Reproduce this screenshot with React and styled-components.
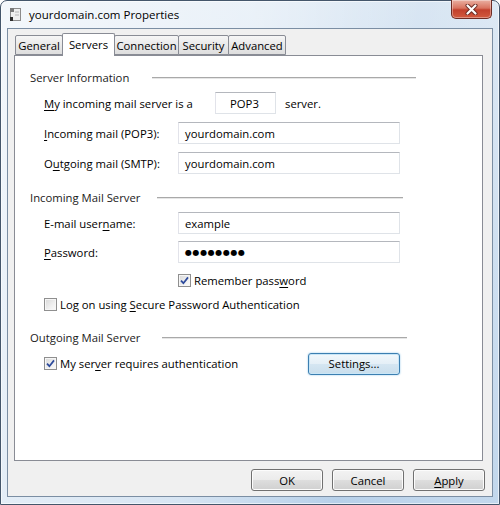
import styled, { createGlobalStyle } from "styled-components"

const GlobalStyle = createGlobalStyle`
  html, body {
    margin: 0;
    padding: 0;
    background: #fff;
  }
  body {
    font-family: "Open Sans", "Noto Sans", sans-serif;
    font-size: 11.3px;
    color: #000;
  }
  * { box-sizing: border-box; }
`

const Window = styled.div`
  width: 500px;
  height: 505px;
  display: flex;
  flex-direction: column;
  padding: 0 6px 7px 6px;
  border: 1px solid #44566b;
  border-radius: 7px 7px 0 0;
  background:
    linear-gradient(100deg, rgba(255,255,255,0.7) 0%, rgba(255,255,255,0.45) 45%, rgba(255,255,255,0) 72%, rgba(255,255,255,0.15) 90%),
    linear-gradient(180deg, #d9e6f3 0%, #c3d8ed 60%, #b7d0e9 100%);
  box-shadow: inset 0 0 0 1px rgba(255,255,255,0.6);
`

const TitleBar = styled.div`
  height: 27px;
  display: flex;
  align-items: center;
`

const TitleIcon = styled.svg`
  width: 15px;
  height: 15px;
  margin-left: 1px;
  flex: none;
`

const TitleText = styled.span`
  margin-left: 6px;
  font-size: 11.5px;
  color: #000;
  flex: 1;
`

const CloseButton = styled.div`
  align-self: flex-start;
  margin-top: -1px;
  margin-right: 1px;
  width: 41px;
  height: 19px;
  display: flex;
  align-items: center;
  justify-content: center;
  border: 1px solid #6e2c24;
  border-top: none;
  border-radius: 0 0 5px 5px;
  background: linear-gradient(180deg, #eab0a2 0%, #d9735f 45%, #c2402c 55%, #d25a3f 100%);
  box-shadow: inset 0 0 0 1px rgba(255,255,255,0.35);
`

const Client = styled.div`
  flex: 1;
  display: flex;
  flex-direction: column;
  background: #f0f0f0;
  border: 1px solid #7b8ea3;
  padding: 4px 9px 0 6px;
`

const TabRow = styled.div`
  display: flex;
  align-items: flex-end;
  height: 23px;
  padding-left: 1px;
  margin-bottom: -1px;
  position: relative;
  z-index: 1;
`

const Tab = styled.div`
  width: ${(p) => p.$w}px;
  height: ${(p) => (p.$active ? 23 : 20)}px;
  margin-bottom: ${(p) => (p.$active ? 0 : 1)}px;
  margin-right: -1px;
  display: flex;
  align-items: center;
  justify-content: center;
  border: 1px solid #898c95;
  border-bottom: ${(p) => (p.$active ? "none" : "1px solid #898c95")};
  border-radius: 2px 2px 0 0;
  background: ${(p) => (p.$active ? "#fff" : "linear-gradient(180deg, #f6f6f6 0%, #e8e8e8 55%, #dedede 100%)")};
  padding-bottom: ${(p) => (p.$active ? 2 : 0)}px;
  position: relative;
  z-index: ${(p) => (p.$active ? 2 : 1)};
`

const Panel = styled.div`
  height: 406px;
  background: #fff;
  border: 1px solid #898c95;
  display: flex;
  flex-direction: column;
  padding-left: 15px;
`

const GroupHeader = styled.div`
  margin-top: ${(p) => p.$top}px;
  height: 16px;
  display: grid;
  grid-template-columns: ${(p) => p.$lineStart - 30}px ${(p) => p.$lineEnd - p.$lineStart}px;
  align-items: center;
`

const GroupLabel = styled.span`
  white-space: nowrap;
  color: #1a1a1a;
`

const GroupLine = styled.div`
  height: 1px;
  margin-top: 1px;
  background: #a9a9a9;
  box-shadow: 0 1px 0 #e6e6e6;
`

const FieldRow = styled.div`
  margin-top: ${(p) => p.$top}px;
  height: ${(p) => p.$h || 22}px;
  padding-left: 14px;
  display: flex;
  align-items: center;
`

const Label = styled.span`
  width: ${(p) => p.$w || 134}px;
  flex: none;
  white-space: nowrap;
`

const Key = styled.span`
  text-decoration: underline;
  text-underline-offset: 2px;
`

const TextBox = styled.div`
  width: ${(p) => p.$w || 222}px;
  height: 22px;
  flex: none;
  display: flex;
  align-items: center;
  padding-left: ${(p) => p.$pad || 6}px;
  background: #fff;
  border: 1px solid #dfe3e8;
  border-top-color: #b4b7bd;
  border-left-color: #e2e3ea;
`

const Dots = styled.span`
  font-family: "DejaVu Sans", sans-serif;
  font-size: 8px;
  letter-spacing: 0.6px;
  font-weight: bold;
`

const TrailText = styled.span`
  margin-left: 9px;
`

const CheckRow = styled.label`
  display: flex;
  align-items: center;
  gap: 3px;
  margin-left: ${(p) => p.$indent || 0}px;
  white-space: nowrap;
`

const Box = styled.span`
  width: 13px;
  height: 13px;
  flex: none;
  display: flex;
  align-items: center;
  justify-content: center;
  border: 1px solid #8f8f8f;
  background: linear-gradient(135deg, #d8d8d8 0%, #f0f0f0 60%, #fbfbfb 100%);
  box-shadow: inset 0 0 0 1px #f6f6f6;
`

const SpreadRow = styled(FieldRow)`
  width: 370px;
  justify-content: space-between;
`

const Button = styled.div`
  width: ${(p) => p.$w || 72}px;
  height: 22px;
  display: flex;
  align-items: center;
  justify-content: center;
  border: 1px solid ${(p) => (p.$focus ? "#3c7fb1" : "#707070")};
  border-radius: 3px;
  background: ${(p) =>
    p.$focus
      ? "linear-gradient(180deg, #f2f8fc 0%, #e4eff7 50%, #d5e6f2 51%, #c9deec 100%)"
      : "linear-gradient(180deg, #f3f3f3 0%, #ebebeb 50%, #dedede 51%, #d0d0d0 100%)"};
  box-shadow: inset 0 0 0 1px ${(p) => (p.$focus ? "#c9e6f7" : "#fcfcfc")}
    ${(p) => (p.$focus ? ", 0 0 2px #8ac3e6" : "")};
`

const ButtonBar = styled.div`
  display: flex;
  justify-content: flex-end;
  gap: 9px;
  margin-top: 8px;
  margin-right: -2px;
`

const Check = ({ checked }) => (
  <Box>
    {checked && (
      <svg width="9" height="9" viewBox="0 0 9 9">
        <path d="M1 4.6 L3.4 7.2 L8 1.4" fill="none" stroke="#2c4a9c" strokeWidth="1.7" />
      </svg>
    )}
  </Box>
)

const tabs = [
  { name: "General", w: 48 },
  { name: "Servers", w: 53, active: true },
  { name: "Connection", w: 65 },
  { name: "Security", w: 51 },
  { name: "Advanced", w: 58 },
]

const App = () => {
  return (
    <>
      <GlobalStyle />
      <Window>
        <TitleBar>
          <TitleIcon viewBox="0 0 15 15">
            <rect x="2.5" y="1.5" width="10" height="12" fill="#efefef" stroke="#8b8b8b" />
            <rect x="2" y="1" width="4" height="4" fill="#7a7a7a" />
            <rect x="2" y="10" width="3" height="4" fill="#2d2d2d" />
            <line x1="7" y1="5" x2="11" y2="5" stroke="#b5b5b5" />
            <line x1="7" y1="8" x2="11" y2="8" stroke="#b5b5b5" />
          </TitleIcon>
          <TitleText>yourdomain.com Properties</TitleText>
          <CloseButton>
            <svg width="13" height="11" viewBox="0 0 13 11">
              <path d="M2.5 1.5 L10.5 9.5 M10.5 1.5 L2.5 9.5" stroke="#6a2a22" strokeWidth="4" strokeLinecap="round" />
              <path d="M2.5 1.5 L10.5 9.5 M10.5 1.5 L2.5 9.5" stroke="#fff" strokeWidth="2.2" strokeLinecap="round" />
            </svg>
          </CloseButton>
        </TitleBar>

        <Client>
          <TabRow>
            {tabs.map((t) => (
              <Tab key={t.name} $w={t.w} $active={t.active}>
                {t.name}
              </Tab>
            ))}
          </TabRow>

          <Panel>
            <GroupHeader $top={13} $lineStart={152} $lineEnd={416}>
              <GroupLabel>Server Information</GroupLabel>
              <GroupLine />
            </GroupHeader>
            <FieldRow $top={7}>
              <Label $w={171}><Key>M</Key>y incoming mail server is a</Label>
              <TextBox $w={61} $pad={14}>POP3</TextBox>
              <TrailText>server.</TrailText>
            </FieldRow>
            <FieldRow $top={8}>
              <Label><Key>I</Key>ncoming mail (POP3):</Label>
              <TextBox>yourdomain.com</TextBox>
            </FieldRow>
            <FieldRow $top={8}>
              <Label>O<Key>u</Key>tgoing mail (SMTP):</Label>
              <TextBox>yourdomain.com</TextBox>
            </FieldRow>

            <GroupHeader $top={15} $lineStart={157} $lineEnd={403}>
              <GroupLabel>Incoming Mail Server</GroupLabel>
              <GroupLine />
            </GroupHeader>
            <FieldRow $top={7}>
              <Label>E-mail user<Key>n</Key>ame:</Label>
              <TextBox>example</TextBox>
            </FieldRow>
            <FieldRow $top={7}>
              <Label><Key>P</Key>assword:</Label>
              <TextBox><Dots>●●●●●●●●</Dots></TextBox>
            </FieldRow>
            <FieldRow $top={9} $h={16}>
              <CheckRow $indent={134}>
                <Check checked />
                <span>Remember pass<Key>w</Key>ord</span>
              </CheckRow>
            </FieldRow>
            <FieldRow $top={8} $h={16}>
              <CheckRow>
                <Check />
                <span>Log on using <Key>S</Key>ecure Password Authentication</span>
              </CheckRow>
            </FieldRow>

            <GroupHeader $top={17} $lineStart={162} $lineEnd={407}>
              <GroupLabel>Outgoing Mail Server</GroupLabel>
              <GroupLine />
            </GroupHeader>
            <SpreadRow $top={7} $h={23}>
              <CheckRow>
                <Check checked />
                <span>My ser<Key>v</Key>er requires authentication</span>
              </CheckRow>
              <Button $w={92} $focus>Settings...</Button>
            </SpreadRow>
          </Panel>

          <ButtonBar>
            <Button>OK</Button>
            <Button>Cancel</Button>
            <Button><span><Key>A</Key>pply</span></Button>
          </ButtonBar>
        </Client>
      </Window>
    </>
  )
}

export default App
